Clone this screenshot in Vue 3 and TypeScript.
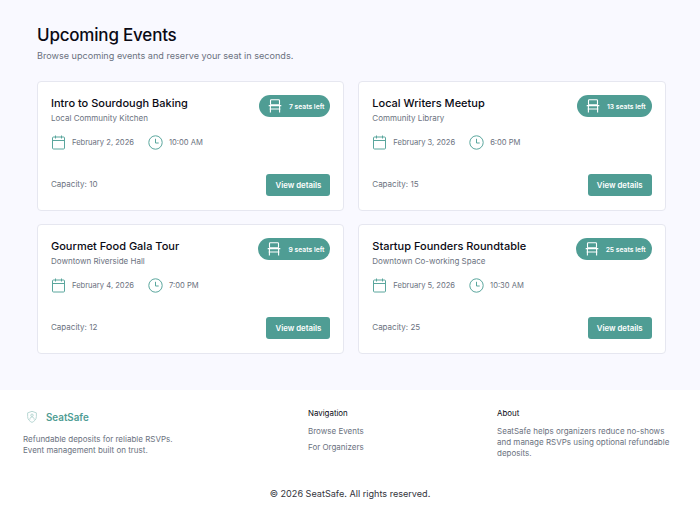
<script setup lang="ts">
interface EventItem { title: string; place: string; date: string; time: string; seats: number; capacity: number }
const events: EventItem[] = [
  { title: 'Intro to Sourdough Baking', place: 'Local Community Kitchen', date: 'February 2, 2026', time: '10:00 AM', seats: 7, capacity: 10 },
  { title: 'Local Writers Meetup', place: 'Community Library', date: 'February 3, 2026', time: '6:00 PM', seats: 13, capacity: 15 },
  { title: 'Gourmet Food Gala Tour', place: 'Downtown Riverside Hall', date: 'February 4, 2026', time: '7:00 PM', seats: 9, capacity: 12 },
  { title: 'Startup Founders Roundtable', place: 'Downtown Co-working Space', date: 'February 5, 2026', time: '10:30 AM', seats: 25, capacity: 25 },
]
</script>

<template>
  <div class="page">
    <main class="main">
      <h1 class="title">Upcoming Events</h1>
      <p class="sub">Browse upcoming events and reserve your seat in seconds.</p>
      <div class="grid">
        <article v-for="e in events" :key="e.title" class="card">
          <div class="top">
            <div class="heading">
              <h2 class="name">{{ e.title }}</h2>
              <p class="place">{{ e.place }}</p>
            </div>
            <div class="badge">
              <svg class="chair" viewBox="0 0 14 14" fill="none" stroke="currentColor" stroke-width="1.1">
                <rect x="2.5" y=".7" width="9" height="5" rx=".8" />
                <path d="M.7 6.6h12.6M1.6 10h10.8M2.4 6.6v6.9M11.6 6.6v6.9" />
              </svg>
              <span>{{ e.seats }} seats left</span>
            </div>
          </div>
          <div class="meta">
            <svg class="ic" viewBox="0 0 15 15" fill="none" stroke="currentColor" stroke-width="1">
              <rect x="1.5" y="2" width="12" height="12" rx="1" />
              <path d="M1.5 5.5h12M4.5 .5v3M10.5 .5v3" />
            </svg>
            <span class="date">{{ e.date }}</span>
            <svg class="ic" viewBox="0 0 15 15" fill="none" stroke="currentColor" stroke-width="1">
              <circle cx="7.5" cy="7.5" r="6.7" />
              <path d="M7.5 3.8v4.2h3.2" />
            </svg>
            <span>{{ e.time }}</span>
          </div>
          <div class="bottom">
            <span class="cap">Capacity: {{ e.capacity }}</span>
            <button class="btn">View details</button>
          </div>
        </article>
      </div>
    </main>
    <footer class="footer">
      <div class="cols">
        <div class="brandcol">
          <div class="brand">
            <svg class="logo" viewBox="0 0 16 16" fill="none" stroke="currentColor" stroke-width="1">
              <path d="M8 1.5l5 1.8v4.2c0 3.2-2.2 5.4-5 6.7-2.8-1.3-5-3.5-5-6.7V3.3z" />
              <circle cx="8" cy="6" r="1.4" />
              <path d="M5.5 11c0-2 1-3 2.5-3s2.5 1 2.5 3" />
            </svg>
            <span>SeatSafe</span>
          </div>
          <p class="ftext brandtext">Refundable deposits for reliable RSVPs.<br />Event management built on trust.</p>
        </div>
        <div class="navcol">
          <h3 class="fhead">Navigation</h3>
          <a class="flink first">Browse Events</a>
          <a class="flink">For Organizers</a>
        </div>
        <div class="aboutcol">
          <h3 class="fhead">About</h3>
          <p class="ftext abouttext">SeatSafe helps organizers reduce no-shows and manage RSVPs using optional refundable deposits.</p>
        </div>
      </div>
      <p class="copy">© 2026 SeatSafe. All rights reserved.</p>
    </footer>
  </div>
</template>

<style>
html, body { margin: 0; background: #fff; }
</style>

<style scoped>
.page { width: 700px; height: 518px; overflow: hidden; font-family: Inter, "Noto Sans", sans-serif; color: #0b0b14; }
.main { background: #f9f9ff; height: 390px; box-sizing: border-box; padding: 24px 34px 0 37px; }
.title { margin: 0; font: 500 17px/22px Inter, sans-serif; letter-spacing: -.2px; color: #0a0a14; }
.sub { margin: 3px 0 0; font-size: 9.1px; line-height: 14px; color: #6b7280; }
.grid { display: grid; grid-template-columns: 307.4px 307.4px; column-gap: 13.9px; row-gap: 13px; margin-top: 18px; }
.card { background: #fff; border: 1px solid #e6e7f0; border-radius: 4px; height: 130px; box-sizing: border-box; padding: 13px 13px 14px; display: flex; flex-direction: column; }
.top { display: flex; justify-content: space-between; align-items: flex-start; }
.name { margin: 1px 0 0; font: 500 11px/14px Inter, sans-serif; color: #0a0a14; }
.place { margin: 2px 0 0; font-size: 8px; line-height: 12px; color: #6b7280; }
.badge { display: flex; align-items: center; gap: 7px; background: #4f9d94; color: #fff; border-radius: 11px; height: 22px; padding: 0 6px 0 9px; font-size: 6.75px; font-weight: 600; }
.chair { width: 14px; height: 14px; }
.meta { display: flex; align-items: center; margin-top: 11px; font-size: 7.6px; color: #6b7280; }
.ic { width: 15px; height: 15px; color: #5aa69d; margin-right: 6px; }
.date { margin-right: 14px; }
.bottom { margin-top: auto; display: flex; justify-content: space-between; align-items: center; }
.cap { font-size: 8px; color: #6b7280; margin-bottom: 2px; }
.btn { border: 0; background: #4f9d94; color: #fff; border-radius: 3px; width: 64px; height: 22px; padding: 0; font: 600 7.8px Inter, sans-serif; }
.footer { height: 128px; box-sizing: border-box; background: #fff; padding: 20px 23px 0; }
.cols { display: flex; }
.brandcol { width: 285px; }
.navcol { width: 189px; }
.aboutcol { flex: 1; }
.brand { display: flex; align-items: center; gap: 7px; color: #4f9d94; font-size: 9.8px; font-weight: 600; height: 14px; }
.logo { width: 14px; height: 14px; margin-left: 2px; opacity: .45; }
.ftext { margin: 0; font-size: 8px; line-height: 11px; color: #6b7280; }
.brandtext { margin-top: 10px; }
.abouttext { margin-top: 7px; }
.fhead { margin: -3px 0 0; font: 400 7.9px/12px Inter, sans-serif; color: #0a0a14; }
.flink { display: block; margin-top: 4px; font-size: 8px; line-height: 12px; color: #6b7280; }
.flink.first { margin-top: 6px; }
.copy { margin: 29px 0 0; text-align: center; font-size: 9.1px; color: #33343c; }
</style>
